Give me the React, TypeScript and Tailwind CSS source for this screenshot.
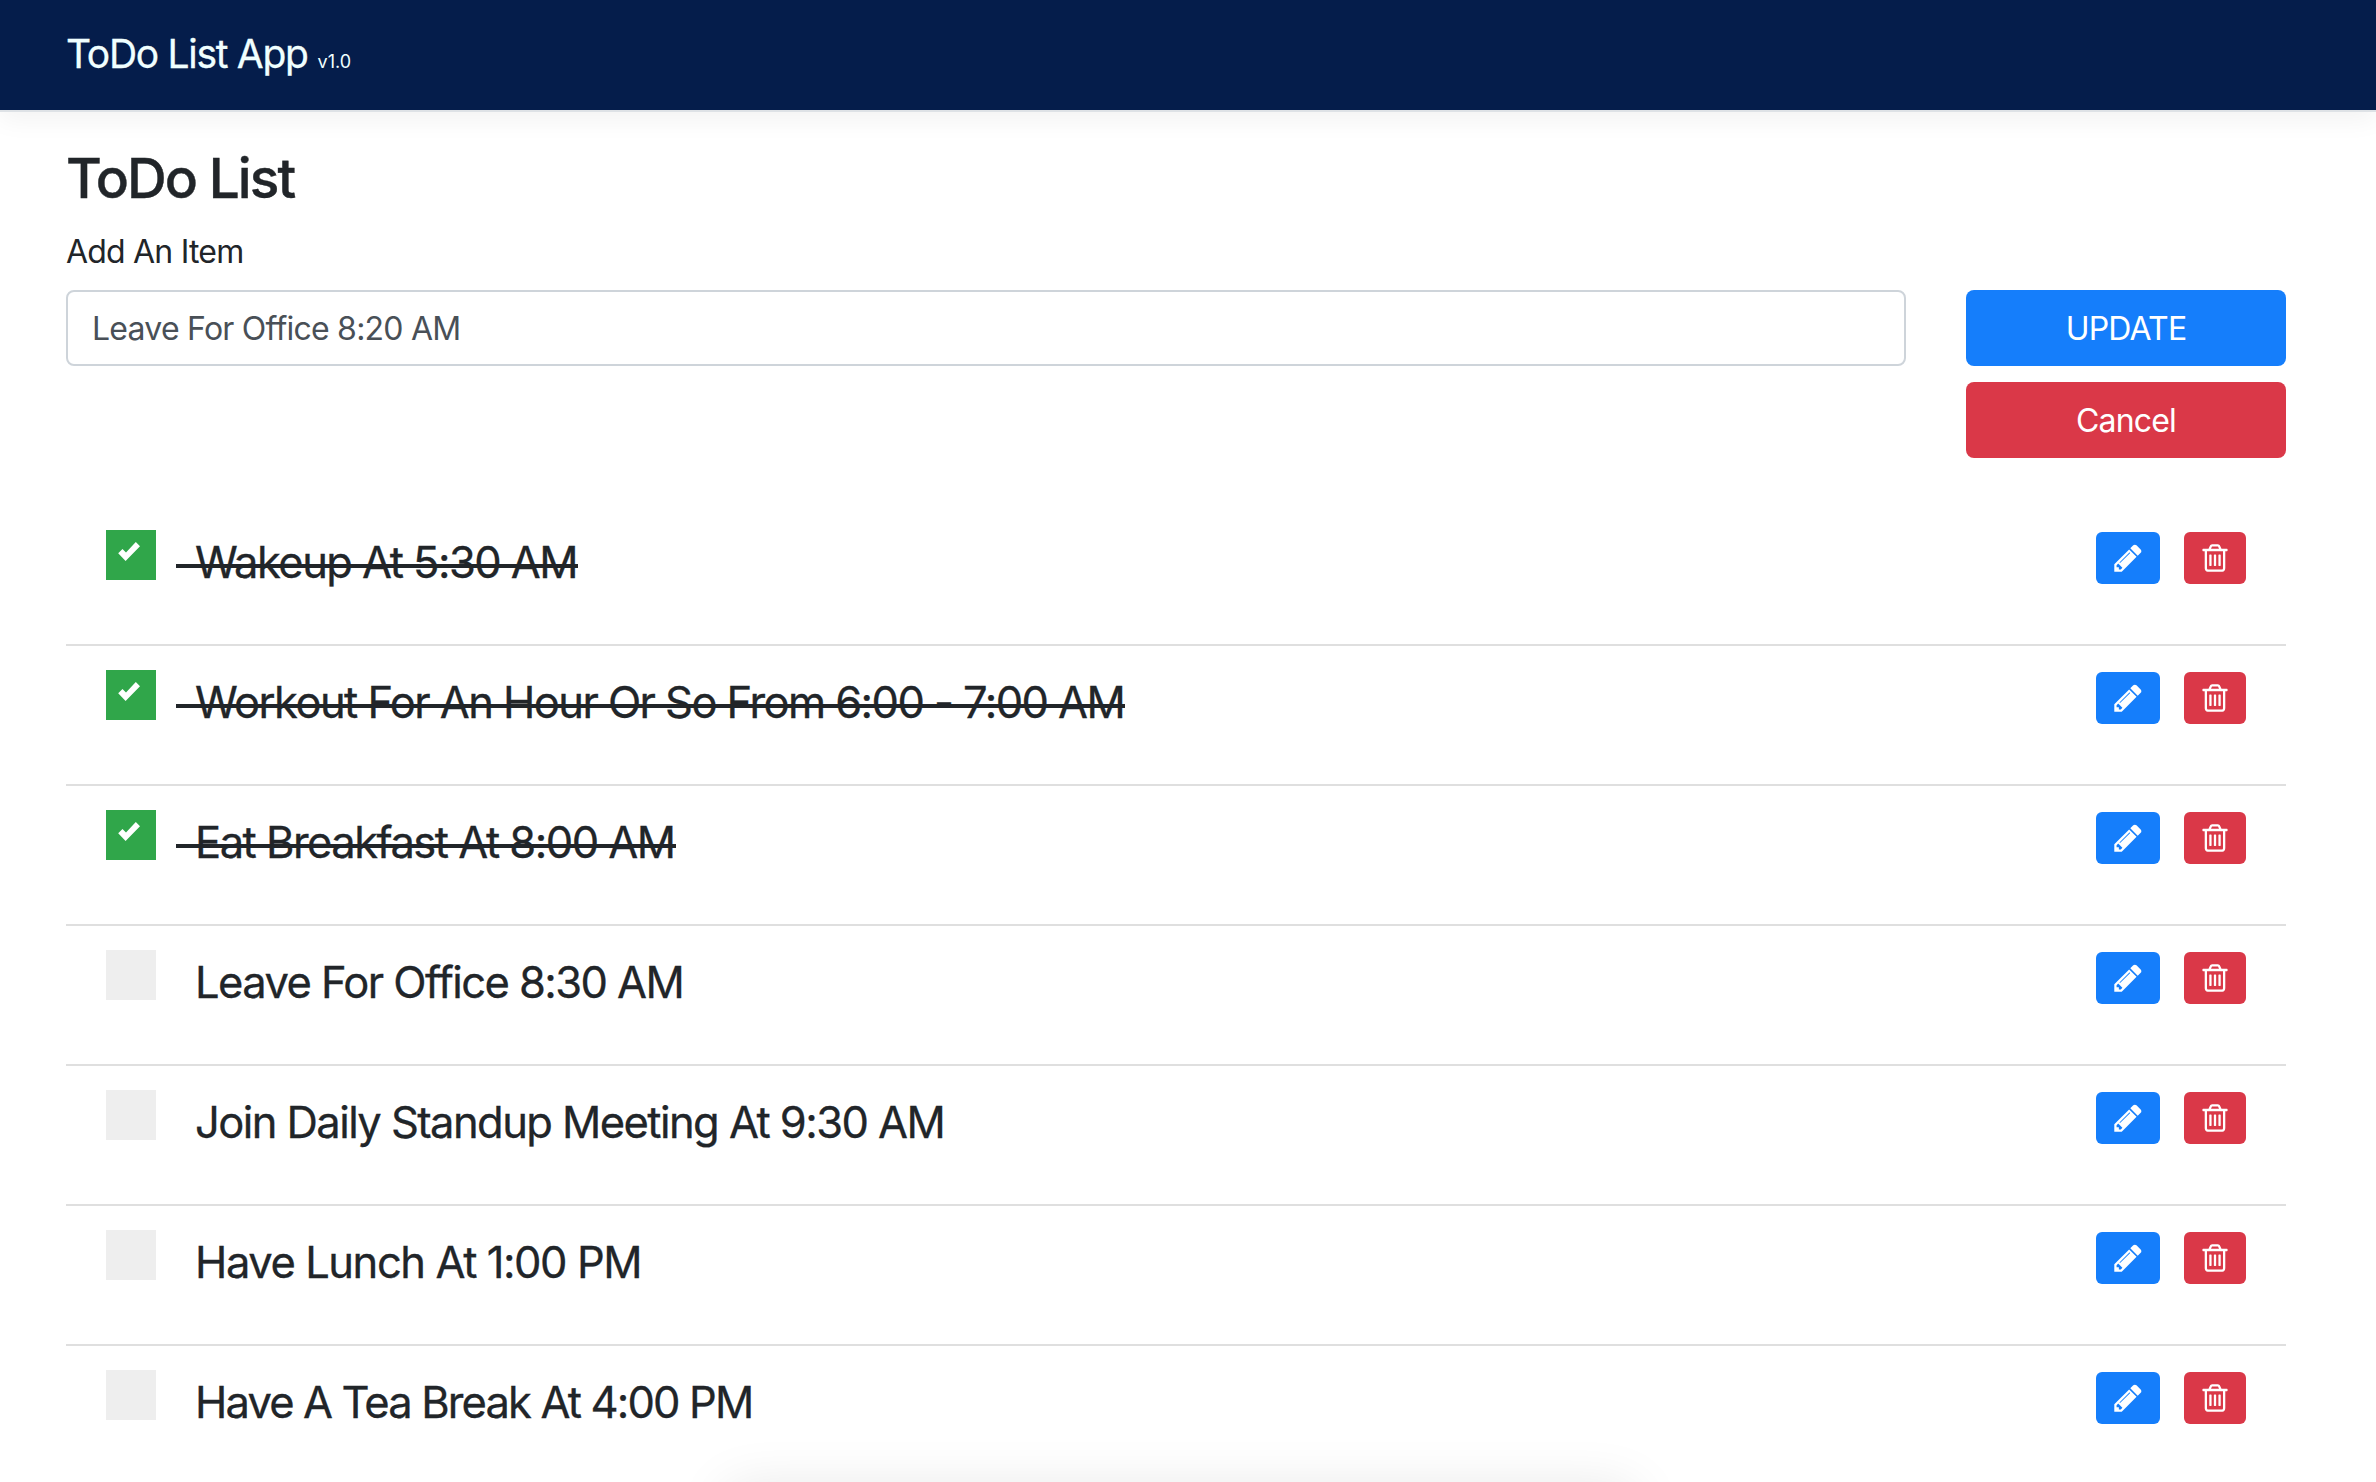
import React from "react";

type Todo = { text: string; done: boolean; tracking: string };

const todos: Todo[] = [
  { text: "Wakeup At 5:30 AM", done: true, tracking: "tracking-[-1.55px]" },
  { text: "Workout For An Hour Or So From 6:00 - 7:00 AM", done: true, tracking: "tracking-[-1.57px]" },
  { text: "Eat Breakfast At 8:00 AM", done: true, tracking: "tracking-[-1.52px]" },
  { text: "Leave For Office 8:30 AM", done: false, tracking: "tracking-[-1.58px]" },
  { text: "Join Daily Standup Meeting At 9:30 AM", done: false, tracking: "tracking-[-1.57px]" },
  { text: "Have Lunch At 1:00 PM", done: false, tracking: "tracking-[-1.43px]" },
  { text: "Have A Tea Break At 4:00 PM", done: false, tracking: "tracking-[-1.86px]" },
];

function PencilIcon() {
  return (
    <svg viewBox="0 0 1792 1792" className="size-8 fill-white">
      <path d="M491 1536l91-91-235-235-91 91v107h128v128h107zM1014 608q0-22-22-22-10 0-17 7l-542 542q-7 7-7 17 0 22 22 22 10 0 17-7l542-542q7-7 7-17zM960 416l416 416-832 832h-416v-416zM1643 512q0 53-37 90l-166 166-416-416 166-165q36-38 90-38 53 0 91 38l235 234q37 39 37 91z" />
    </svg>
  );
}

function TrashIcon() {
  return (
    <svg viewBox="0 0 1792 1792" className="size-8 fill-white">
      <path d="M704 736v576q0 14-9 23t-23 9h-64q-14 0-23-9t-9-23v-576q0-14 9-23t23-9h64q14 0 23 9t9 23zM960 736v576q0 14-9 23t-23 9h-64q-14 0-23-9t-9-23v-576q0-14 9-23t23-9h64q14 0 23 9t9 23zM1216 736v576q0 14-9 23t-23 9h-64q-14 0-23-9t-9-23v-576q0-14 9-23t23-9h64q14 0 23 9t9 23zM1344 1460v-948h-896v948q0 22 7 40.500t14.500 27 10.500 8.500h832q3 0 10.500-8.500t14.500-27 7-40.500zM672 384h448l-48-117q-7-9-17-11h-317q-10 2-17 11zM1600 416v64q0 14-9 23t-23 9h-96v948q0 83-47 143.500t-113 60.500h-832q-66 0-113-58.500t-47-141.500v-952h-96q-14 0-23-9t-9-23v-64q0-14 9-23t23-9h309l70-167q15-37 54-63t79-26h320q40 0 79 26t54 63l70 167h309q14 0 23 9t9 23z" />
    </svg>
  );
}

function TodoRow({ todo }: { todo: Todo }) {
  return (
    <li className="flex h-[140px] items-start border-b-2 border-[#dfdfdf] px-10 pt-[24px]">
      <div className={`size-[50px] shrink-0 ${todo.done ? "bg-[#30a64a]" : "bg-[#eeeeee]"}`}>
        {todo.done && (
          <svg viewBox="0 0 50 50" className="size-full fill-white">
            <path d="M12.200 23.300 16.500 19 20 22.500 29.800 12 34 16.300 19.600 31Z" />
          </svg>
        )}
      </div>
      <div className="ml-5 flex-1 text-[43.500px] leading-[64px] whitespace-pre [-webkit-text-stroke:0.3px_#212529]">
        <span className={`inline-block pl-[19px] ${todo.done ? "relative" : ""} ${todo.tracking}`}>
          {todo.text}
          {todo.done && <span className="absolute top-[34px] right-[-1px] left-0 h-1 bg-[#212529]" />}
        </span>
      </div>
      <div className="mt-0.5 flex gap-6">
        <button className="flex h-[52px] w-16 items-center justify-center rounded-[6px] bg-[#157efb]">
          <PencilIcon />
        </button>
        <button className="flex h-[52px] w-[62px] items-center justify-center rounded-[6px] bg-[#da3848]">
          <TrashIcon />
        </button>
      </div>
    </li>
  );
}

export default function App() {
  return (
    <div className="relative flex h-[1482px] w-[2376px] flex-col overflow-hidden bg-white font-['Inter',sans-serif] text-[#212529]">
      <header className="flex h-[112px] shrink-0 items-baseline border-b-2 border-[#dee2e6] bg-[#051d4b] pl-[66px] text-[#f0ffff] shadow-[0_8px_24px_rgba(0,0,0,0.05)]">
        <span className="text-[39px] leading-[108px] tracking-[-1.3px] [-webkit-text-stroke:0.3px_#f0ffff]">ToDo List App</span>
        <span className="ml-[10px] text-[18px]">v1.0</span>
      </header>
      <main className="flex flex-col px-[66px] pr-[90px]">
        <h1 className="mt-[32px] text-[55px] leading-[69px] font-medium tracking-[-1.95px] [-webkit-text-stroke:0.4px_#212529]">ToDo List</h1>
        <label className="mt-[15px] text-[32px] leading-[48px] tracking-[-0.8px]">Add An Item</label>
        <div className="mt-[14px] flex items-start gap-[60px]">
          <div className="flex h-[76px] w-[1840px] items-center rounded-[8px] border-2 border-[#ced4da] px-6 pt-0.5 text-[32px] tracking-[-0.76px] text-[#495057]">
            Leave For Office 8:20 AM
          </div>
          <div className="flex w-[320px] flex-col gap-4 text-[32px] text-white">
            <button className="h-[76px] rounded-[8px] bg-[#157efb] pt-0.5 tracking-[-0.8px]">UPDATE</button>
            <button className="h-[76px] rounded-[8px] bg-[#da3848] pt-0.5 tracking-[-0.8px]">Cancel</button>
          </div>
        </div>
        <ul className="mt-12">
          {todos.map((todo) => (
            <TodoRow key={todo.text} todo={todo} />
          ))}
        </ul>
      </main>
      <div className="absolute top-[1490px] left-[728px] h-[100px] w-[905px] shadow-[0_0_56px_rgba(0,0,0,0.11)]" />
    </div>
  );
}
